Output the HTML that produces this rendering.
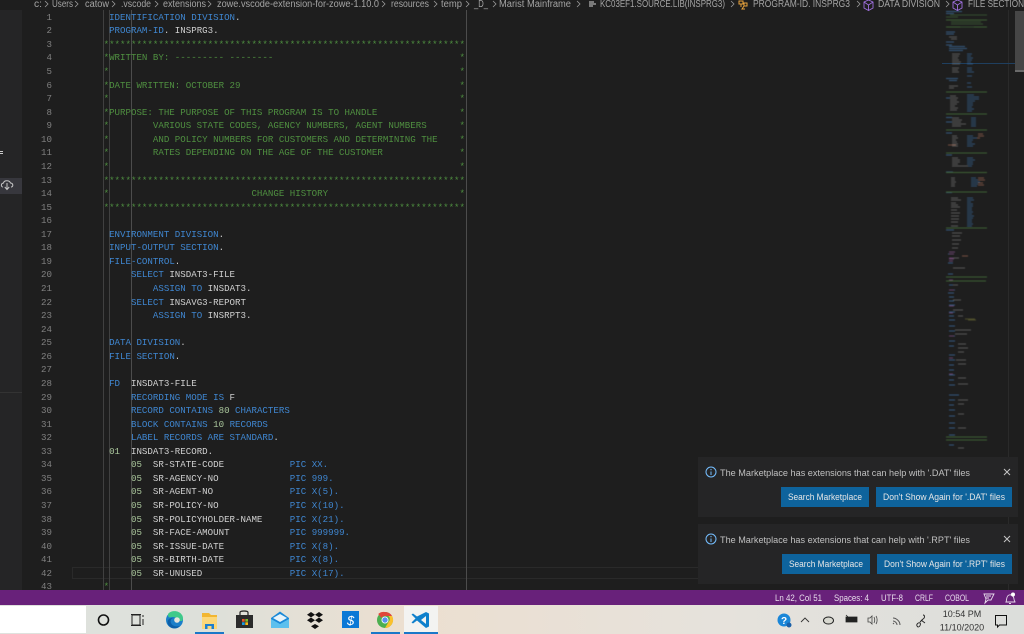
<!DOCTYPE html>
<html><head><meta charset="utf-8"><style>
html,body{margin:0;padding:0;width:1024px;height:634px;overflow:hidden;background:#1e1e1e}
#wrap{position:relative;width:1024px;height:634px;overflow:hidden;filter:blur(.35px)}
.a{position:absolute}
pre{margin:0;font-family:"Liberation Mono",monospace;font-size:9.13px;line-height:13.56px;position:absolute}
#code{left:103.6px;top:10.8px;color:#cfcfcf}
#nums{left:22px;width:30px;top:10.8px;text-align:right;color:#808080}
.c{color:#4f8f40}.k{color:#3f86d0}.n{color:#a9c59b}
svg{position:absolute;left:0;top:0}
svg text{font-family:"Liberation Sans",sans-serif}
</style></head><body><div id="wrap">
<div class="a" style="left:0;top:0;width:22px;height:590px;background:#252526"></div>
<div class="a" style="left:0;top:178px;width:22px;height:16px;background:#37373d"></div>
<div class="a" style="left:0;top:392px;width:22px;height:1px;background:#333"></div>
<div class="a" style="left:0;top:151px;width:3px;height:1px;background:#ccc"></div>
<div class="a" style="left:0;top:153px;width:3px;height:1px;background:#ccc"></div>
<div class="a" style="left:72px;top:567px;width:936px;height:12px;border:1px solid #2a2a2a;box-sizing:border-box"></div>
<div class="a" style="left:103px;top:10px;width:1px;height:580px;background:#404040"></div>
<div class="a" style="left:109px;top:10px;width:1px;height:580px;background:#404040"></div>
<div class="a" style="left:131px;top:10px;width:1px;height:580px;background:#4c4c4c"></div>
<div class="a" style="left:466px;top:10px;width:1px;height:580px;background:#4c4c4c"></div>
<pre id="nums">1
2
3
4
5
6
7
8
9
10
11
12
13
14
15
16
17
18
19
20
21
22
23
24
25
26
27
28
29
30
31
32
33
34
35
36
37
38
39
40
41
42
43</pre>
<pre id="code"> <span class="k">IDENTIFICATION DIVISION</span>.
 <span class="k">PROGRAM-ID</span>. INSPRG3.
<span class="c">******************************************************************
*WRITTEN BY: --------- --------                                  *
*                                                                *
*DATE WRITTEN: OCTOBER 29                                        *
*                                                                *
*PURPOSE: THE PURPOSE OF THIS PROGRAM IS TO HANDLE               *
*        VARIOUS STATE CODES, AGENCY NUMBERS, AGENT NUMBERS      *
*        AND POLICY NUMBERS FOR CUSTOMERS AND DETERMINING THE    *
*        RATES DEPENDING ON THE AGE OF THE CUSTOMER              *
*                                                                *
******************************************************************
*                          CHANGE HISTORY                        *
******************************************************************</span>

 <span class="k">ENVIRONMENT DIVISION</span>.
 <span class="k">INPUT-OUTPUT SECTION</span>.
 <span class="k">FILE-CONTROL</span>.
     <span class="k">SELECT</span> INSDAT3-FILE
         <span class="k">ASSIGN TO</span> INSDAT3.
     <span class="k">SELECT</span> INSAVG3-REPORT
         <span class="k">ASSIGN TO</span> INSRPT3.

 <span class="k">DATA DIVISION</span>.
 <span class="k">FILE SECTION</span>.

 <span class="k">FD</span>  INSDAT3-FILE
     <span class="k">RECORDING MODE IS</span> F
     <span class="k">RECORD CONTAINS</span> <span class="n">80</span> <span class="k">CHARACTERS</span>
     <span class="k">BLOCK CONTAINS</span> <span class="n">10</span> <span class="k">RECORDS</span>
     <span class="k">LABEL RECORDS ARE STANDARD</span>.
 <span class="n">01</span>  INSDAT3-RECORD.
     <span class="n">05</span>  SR-STATE-CODE            <span class="k">PIC XX.</span>
     <span class="n">05</span>  SR-AGENCY-NO             <span class="k">PIC 999.</span>
     <span class="n">05</span>  SR-AGENT-NO              <span class="k">PIC X(5).</span>
     <span class="n">05</span>  SR-POLICY-NO             <span class="k">PIC X(10).</span>
     <span class="n">05</span>  SR-POLICYHOLDER-NAME     <span class="k">PIC X(21).</span>
     <span class="n">05</span>  SR-FACE-AMOUNT           <span class="k">PIC 999999.</span>
     <span class="n">05</span>  SR-ISSUE-DATE            <span class="k">PIC X(8).</span>
     <span class="n">05</span>  SR-BIRTH-DATE            <span class="k">PIC X(8).</span>
     <span class="n">05</span>  SR-UNUSED                <span class="k">PIC X(17).</span>
<span class="c">*</span></pre>
<div class="a" style="left:0;top:0;width:1024px;height:10px;background:#1e1e1e"></div>
<div class="a" style="left:1008px;top:10px;width:1px;height:580px;background:#2a2a2a"></div>
<div class="a" style="left:1015px;top:11px;width:9px;height:61px;background:#464646"></div>
<div class="a" style="left:1015px;top:70px;width:9px;height:2px;background:#6a6a6a"></div>
<div class="a" style="left:942px;top:63px;width:73px;height:1px;background:#1f3f5f"></div>

<svg width="1024" height="634" viewBox="0 0 1024 634">
<!-- minimap -->
<g fill="none" stroke-width="1" style="filter:blur(.4px)">
<g opacity=".55">
<path stroke="#4a8ad0" d="M946 11.500h16M946 13.500h8M946 32h9M946 34h8M946 42h8M946 45h6M949 46.500h16M949 48.500h18M949 50.500h14M946 78.500h12M949 80.500h8M946 98h12M946 117.500h6M946 122h7M946 133h6M946 155h6M946 172h7M946 192.500h6M946 230h8M948 254h5M948 263h5M948 274h5M948 281h5M948 293h6M949 320h6M949 326h6M949 355h6M949 370h5M949 395h10M949 410h6M949 423h6M949 435h6M949 285h5M949 290h6M949 297h5M949 301h5M949 305h6M949 312h6M949 316h5M949 331h6M949 336h6M949 341h6M949 346h5M949 360h6M949 365h5M949 375h6M949 380h5M949 385h6M949 400h6M949 405h5M949 416h6M949 428h6M949 445h5"/>
<path stroke="#3e7ab8" d="M967 54h5M967 56h4M967 58h6M967 60h5M967 62h4M967 64h6M967 68h5M967 70h5M967 72h7M967 76h5M967 83h4M967 87h5M967 95h7M967 97h12M967 99h12M967 101h8M967 103h6M967 105h6M967 107h5M967 109h7M967 111h5M971 118h5M971 120h5M971 122h5M971 124h5M971 126h5M967 136h6M967 138h10M967 140h6M967 142h5M967 144h8M967 146h6M967 158h6M967 160h8M967 162h6M967 164h6M967 166h5M971 178h5M971 180h9M971 182h9M971 184h7M971 186h6M967 198h6M967 200h7M967 202h4M967 204h6M967 206h6M967 208h5M967 210h5M967 212h6M967 214h5M967 216h7M967 218h6M967 220h5M967 222h5M967 224h6M967 226h5"/>
<path stroke="#8a8a8a" d="M952 54h8M952 56h7M952 58h6M952 60h7M952 62h9M952 64h8M952 68h7M952 70h6M952 72h7M949 37h8M951 39h6M949 86h9M949 88h5M950 96h6M950 98h8M950 100h7M950 102h9M950 104h7M950 106h5M950 108h8M950 110h7M952 118h7M952 120h10M952 122h9M952 124h14M952 126h9M952 136h5M952 138h6M952 140h4M952 142h5M952 144h6M952 146h6M952 158h6M952 160h8M952 162h8M952 164h6M952 166h16M951 178h4M951 180h4M951 182h5M951 184h4M951 186h4M951 198h7M951 200h10M951 203h5M951 205h7M951 207h9M951 210h6M951 213h9M951 216h8M951 219h8M951 222h7M951 226h7M952 233h10M952 236h8M952 240h9M952 244h7M952 248h6M950 258h9M953 268h12M953 285h5M953 300h8M953 310h10M958 316h5M955 330h16M955 334h12M958 344h8M958 348h10M958 352h6M956 360h10M958 364h8M958 378h8M958 384h10M958 400h10M958 404h6M958 414h6M958 428h8M958 440h8M958 448h6"/>
<path stroke="#5a9a48" d="M946 20h41M946 27h41M946 92h41M946 114h41M946 130h41M946 153h41M946 172.500h41M946 192h41M946 228h41M946 277h41M946 281h40M946 437h41M946 440h41"/>
<path stroke="#4a7a40" d="M951 22h30M951 24h32M950 15h37M946 17h12M960 27h14"/>
<path stroke="#c07a60" d="M978 134h5M978 136h6M948 145h8M978 178h6M978 180h7M978 183h5M978 185h6M962 256h6M977 138h3"/>
<path stroke="#a060a8" d="M949 252h6M949 254h5M949 258h4M949 259h5M949 261h4M949 280h4M949 290h5M949 306h5M949 313h4M949 336h5M949 358h4M949 374h4"/>
<path stroke="#7a7a3a" d="M965 319h10M968 320h8"/>
</g>
</g>

<!-- breadcrumbs -->
<g font-size="10" fill="#a4a4a4">
<text x="34" y="7" textLength="8" lengthAdjust="spacingAndGlyphs">c:</text>
<text x="52" y="7" textLength="21" lengthAdjust="spacingAndGlyphs">Users</text>
<text x="85" y="7" textLength="24" lengthAdjust="spacingAndGlyphs">catow</text>
<text x="121" y="7" textLength="30" lengthAdjust="spacingAndGlyphs">.vscode</text>
<text x="163" y="7" textLength="43" lengthAdjust="spacingAndGlyphs">extensions</text>
<text x="217" y="7" textLength="162" lengthAdjust="spacingAndGlyphs">zowe.vscode-extension-for-zowe-1.10.0</text>
<text x="391" y="7" textLength="38" lengthAdjust="spacingAndGlyphs">resources</text>
<text x="441" y="7" textLength="21" lengthAdjust="spacingAndGlyphs">temp</text>
<text x="474" y="7" textLength="14" lengthAdjust="spacingAndGlyphs">_D_</text>
<text x="499" y="7" textLength="72" lengthAdjust="spacingAndGlyphs">Marist Mainframe</text>
<text x="600" y="7" textLength="125" lengthAdjust="spacingAndGlyphs">KC03EF1.SOURCE.LIB(INSPRG3)</text>
<text x="753" y="7" textLength="97" lengthAdjust="spacingAndGlyphs">PROGRAM-ID. INSPRG3</text>
<text x="878" y="7" textLength="62" lengthAdjust="spacingAndGlyphs">DATA DIVISION</text>
<text x="968" y="7" textLength="56" lengthAdjust="spacingAndGlyphs">FILE SECTION</text>
</g>
<g fill="none" stroke="#9a9a9a" stroke-width=".8">
<path d="M45 1l3 3-3 3M75 1l3 3-3 3M112 1l3 3-3 3M155 1l3 3-3 3M208 1l3 3-3 3M382 1l3 3-3 3M434 1l3 3-3 3M466 1l3 3-3 3M493 1l3 3-3 3M577 1l3 3-3 3M731 1l3 3-3 3M857 1l3 3-3 3M946 1l3 3-3 3"/>
</g>
<path d="M589 2h5M589 4h7M589 6h4" stroke="#d4d4d4" fill="none"/>
<path d="M739 1h4v3h-4zM744 3h3v3h-3zM744 6l-2 3h3M741 4v3" stroke="#e8a33c" fill="none" stroke-width="1"/>
<path d="M864 2l4.500-2 4.500 2v6l-4.500 2.500-4.500-2.500zM864 2l4.500 3 4.500-3M868.500 5v5" stroke="#a070e0" fill="none" stroke-width=".9"/>
<path d="M953 2l4.500-2 4.500 2v6l-4.500 2.500-4.500-2.500zM953 2l4.500 3 4.500-3M957.500 5v5" stroke="#a070e0" fill="none" stroke-width=".9"/>
<!-- cloud icon in sidebar -->
<path d="M3 187c-2 0-2.500-3.500 .5-4 .5-3 6-3 7 0 3 .3 3 4 .5 4M7 183v6M4.800 187l2.200 2.500 2.200-2.500" fill="none" stroke="#c8c8c8" stroke-width="1"/>

<!-- notifications -->
<rect x="698" y="457" width="320" height="60" fill="#252526"/>
<rect x="698" y="524" width="320" height="60" fill="#252526"/>
<rect x="781" y="487" width="88" height="20" fill="#0e639c"/>
<rect x="876" y="487" width="136" height="20" fill="#0e639c"/>
<rect x="782" y="554" width="88" height="20" fill="#0e639c"/>
<rect x="877" y="554" width="135" height="20" fill="#0e639c"/>
<g fill="none" stroke="#75beff" stroke-width="1"><circle cx="711" cy="472" r="5"/><circle cx="711" cy="539" r="5"/></g>
<path d="M711 471.500v3.500M711 469v1.200M711 538.500v3.500M711 536v1.200" stroke="#75beff" stroke-width="1"/>
<path d="M1004 469l6 6M1010 469l-6 6M1004 536l6 6M1010 536l-6 6" stroke="#c5c5c5" stroke-width="1"/>
<g font-size="9.500" fill="#c0c0c0">
<text x="720" y="476" textLength="250" lengthAdjust="spacingAndGlyphs">The Marketplace has extensions that can help with '.DAT' files</text>
<text x="720" y="543" textLength="250" lengthAdjust="spacingAndGlyphs">The Marketplace has extensions that can help with '.RPT' files</text>
</g>
<g font-size="9.500" fill="#e6e6e6">
<text x="788" y="500" textLength="74" lengthAdjust="spacingAndGlyphs">Search Marketplace</text>
<text x="883" y="500" textLength="122" lengthAdjust="spacingAndGlyphs">Don't Show Again for '.DAT' files</text>
<text x="789" y="567" textLength="74" lengthAdjust="spacingAndGlyphs">Search Marketplace</text>
<text x="884" y="567" textLength="121" lengthAdjust="spacingAndGlyphs">Don't Show Again for '.RPT' files</text>
</g>

<!-- status bar -->
<rect x="0" y="590" width="1024" height="15" fill="#68217a"/>
<g font-size="9" fill="#e8dcec">
<text x="775" y="601" textLength="47" lengthAdjust="spacingAndGlyphs">Ln 42, Col 51</text>
<text x="834" y="601" textLength="35" lengthAdjust="spacingAndGlyphs">Spaces: 4</text>
<text x="881" y="601" textLength="22" lengthAdjust="spacingAndGlyphs">UTF-8</text>
<text x="915" y="601" textLength="18" lengthAdjust="spacingAndGlyphs">CRLF</text>
<text x="945" y="601" textLength="24" lengthAdjust="spacingAndGlyphs">COBOL</text>
</g>
<path d="M984 594h10l-3 6h-3l-3 3 1-4zM986 596h5M986 598h3" fill="none" stroke="#e8dcec" stroke-width=".9"/>
<path d="M1006 602c1-2 0-6 3-7 3-1 5 2 5 4s1 2 1 3zM1009 603.500h2" fill="none" stroke="#e8dcec" stroke-width=".9"/>
<circle cx="1013" cy="594.500" r="2" fill="#fff"/>

<!-- taskbar -->
<defs>
<linearGradient id="tb" x1="0" x2="1" y1="0" y2="0"><stop offset="0" stop-color="#dfe2de"/><stop offset=".2" stop-color="#dde0da"/><stop offset=".4" stop-color="#ecdfd0"/><stop offset=".7" stop-color="#e6e2dc"/><stop offset="1" stop-color="#dcdedb"/></linearGradient>
</defs>
<rect x="0" y="605" width="1024" height="29" fill="url(#tb)"/>
<rect x="0" y="606" width="86" height="27" fill="#fff"/>
<circle cx="103.500" cy="620" r="5" fill="none" stroke="#111" stroke-width="1.600"/>
<path d="M132 615h8v10h-8zM143 615v2M143 619v6M131 614.500h10M131 625.500h10" fill="none" stroke="#222" stroke-width="1"/>
<!-- edge -->
<circle cx="174.500" cy="620" r="8.500" fill="#1b7fc9"/>
<path d="M168 614c3-4 11-4 14 1 1.500 2 1 5 0 6l-6 0c1-2 0-4-3-4-3 0-5 2-5-3z" fill="#3fc98a"/>
<path d="M174 618c-3 0-4 3-3 5 1 3 5 4 9 3-3 3-8 3-11 0-3-4-1-9 5-8z" fill="#0c5fa8"/>
<circle cx="177" cy="620" r="2.800" fill="#e6e4dc"/>
<!-- explorer -->
<path d="M202 613h7l2 2h6v14h-15z" fill="#f2b631"/>
<rect x="202" y="617" width="15" height="12" fill="#fcd779"/>
<path d="M205 629v-5h9v5h-2.500v-3h-4v3z" fill="#1e7fd0"/>
<rect x="195" y="632" width="29" height="2" fill="#1a78c8"/>
<!-- store -->
<path d="M240 615v-2.500c0-2 8-2 8 0v2.500" fill="none" stroke="#222" stroke-width="1.200"/>
<rect x="236" y="615" width="17" height="13" fill="#2b2b2b"/>
<rect x="242" y="619" width="2.700" height="2.700" fill="#e8532a"/><rect x="245.300" y="619" width="2.700" height="2.700" fill="#7cb82a"/><rect x="242" y="622.300" width="2.700" height="2.700" fill="#1a9be0"/><rect x="245.300" y="622.300" width="2.700" height="2.700" fill="#f7b814"/>
<!-- mail -->
<path d="M271 618l9-6.500 9 6.500v10h-18z" fill="#1989d8"/>
<path d="M271 619l9 5 9-5v9h-18z" fill="#5cc0ee"/>
<path d="M273 618l7-4 7 4-7 4z" fill="#e8f4fb"/>
<!-- dropbox -->
<path d="M311 612l4 2.700-4 2.700-4-2.700zM319 612l4 2.700-4 2.700-4-2.700zM311 617.500l4 2.700-4 2.700-4-2.700zM319 617.500l4 2.700-4 2.700-4-2.700zM315 624l4 2.300-4 2.700-4-2.700z" fill="#111"/>
<!-- S app -->
<rect x="342" y="611" width="17" height="17" fill="#0a78d6"/>
<text x="347" y="625" font-size="13" font-style="italic" fill="#fff" font-family="Liberation Serif">$</text>
<!-- chrome -->
<circle cx="385" cy="620" r="8" fill="#4caf50"/>
<path d="M385 612a8 8 0 0 1 7 4h-7a4 4 0 0 0-3.500 2l-3.300-4a8 8 0 0 1 6.800-2z" fill="#e0453a"/>
<path d="M392 616a8 8 0 0 1-7 12l3.500-6a4 4 0 0 0 0-6z" fill="#fbc02d"/>
<circle cx="385" cy="620" r="3.500" fill="#fff"/><circle cx="385" cy="620" r="2.700" fill="#5a8ff0"/>
<rect x="371" y="632" width="29" height="2" fill="#1a78c8"/>
<!-- vscode -->
<rect x="404" y="606" width="34" height="28" fill="#f3f3f1"/>
<path d="M426 612l3 1.500v13l-3 1.500-9-7.500-4 3-1.500-1 4-4-4-4 1.500-1 4 3zM426 616l-5 4 5 4z" fill="#0f80cc" fill-rule="evenodd"/>
<rect x="404" y="632" width="34" height="2" fill="#1a78c8"/>
<!-- tray -->
<circle cx="784" cy="620" r="6.500" fill="#1a86d8"/>
<text x="781" y="624" font-size="10" font-weight="bold" fill="#fff">?</text>
<circle cx="789" cy="625" r="2.500" fill="#1a5fa8"/>
<path d="M801 622l4-4 4 4" fill="none" stroke="#333" stroke-width=".9"/>
<ellipse cx="828.500" cy="620.500" rx="5" ry="3.500" fill="#d8d8d0" stroke="#222"/>
<path d="M846 617h11v5h-11zM846 615l2 2" fill="#222" stroke="#222" stroke-width=".8"/>
<path d="M868 618h2l2-2v8l-2-2h-2zM874 617c1 2 1 4 0 6M876 616c1.500 2 1.500 6 0 8" fill="none" stroke="#444" stroke-width=".8"/>
<path d="M893 624l1-1M893 621c2 0 4 2 4 4M893 618c3 0 7 3 7 7" fill="none" stroke="#555" stroke-width="1"/>
<path d="M917 626c-1-2 2-4 3-3s0 4-2 4zM923 615c2 0 2 3 0 4l-3 3M921 620l4 3" fill="none" stroke="#222" stroke-width=".9"/>
<g font-size="9" fill="#333" text-anchor="middle">
<text x="962" y="617">10:54 PM</text>
<text x="962" y="630.500">11/10/2020</text>
</g>
<path d="M995.500 615.500h11v9.500h-7l-2 2v-2h-2z" fill="none" stroke="#111" stroke-width="1"/>
</svg>
</div></body></html>
